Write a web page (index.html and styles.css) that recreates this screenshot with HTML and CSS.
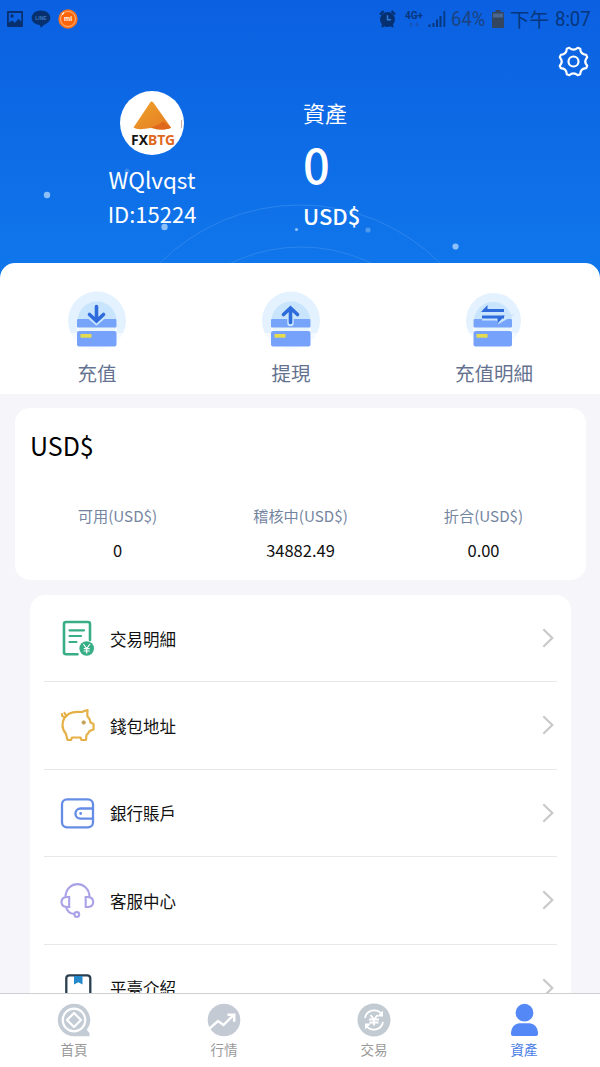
FILE: index.html
```html
<!DOCTYPE html>
<html lang="zh-Hant">
<head>
<meta charset="utf-8">
<title>資產</title>
<link rel="stylesheet" href="styles.css">
</head>
<body>
<div class="app">
  <header class="hero">
    <svg class="hero-art" width="600" height="280" viewBox="0 0 600 280" fill="none">
      <circle cx="300" cy="403" r="198" stroke="#4795f1" stroke-opacity=".5"/>
      <circle cx="301" cy="408" r="161" stroke="#4795f1" stroke-opacity=".5"/>
      <g fill="#8dc0f8">
        <circle cx="47" cy="195" r="3.2"/>
        <circle cx="164.500" cy="227" r="3.2"/>
        <circle cx="296.500" cy="229.500" r="1.6"/>
        <circle cx="368" cy="230" r="2.6" opacity=".5"/>
        <circle cx="455.500" cy="246.500" r="3.1"/>
        <circle cx="127" cy="171" r="2.5" opacity=".3"/>
      </g>
    </svg>
    <div class="status">
      <div class="status-side status-left">
        <svg width="18" height="18" viewBox="0 0 18 18"><path fill="#06306f" fill-rule="evenodd" d="M2 1h14q1 0 1 1v14q0 1-1 1H2q-1 0-1-1V2q0-1 1-1zM2.800 3v9.500l3.200-2 3 2.200 3.500-4 2.800 3V3z"/><circle cx="6" cy="6" r="1.700" fill="#06306f"/></svg>
        <svg width="20" height="18" viewBox="0 0 20 18"><path fill="#06306f" d="M10 .5c5.200 0 9.300 3.200 9.300 7.300 0 3.500-3.500 5.900-6.500 7.200L10 17.700 8.800 15C4 14.500.7 11.900.7 7.800S4.800.5 10 .5z"/><text class="line-mark" x="10" y="10" text-anchor="middle">LINE</text></svg>
        <svg width="20" height="20" viewBox="0 0 20 20"><circle cx="10" cy="10" r="9.700" fill="#f57220"/><circle cx="10" cy="10" r="7.500" fill="#fb6509" stroke="#ffc391" stroke-width=".8"/><path d="M4 5.500 6 3.700" stroke="#fff" stroke-width="1.300"/><text class="mi-mark" x="10" y="12.300" text-anchor="middle">mi</text></svg>
      </div>
      <div class="status-side status-right">
        <svg width="17" height="18" viewBox="0 0 17 18"><path d="M1 4.500 4.500 1M12.500 1 16 4.500M3 17l2-2.500M14 17l-2-2.500" stroke="#06306f" stroke-width="2.300"/><circle cx="8.500" cy="9.500" r="7.400" fill="#06306f"/><path d="M8.500 5.300v4.500H12" fill="none" stroke="#2f7ce0" stroke-width="1.500"/></svg>
        <div class="network"><span>4G+</span><svg width="10" height="5" viewBox="0 0 10 5"><path d="M2 5V1M.5 2.500 2 1l1.500 1.500M8 0v4M6.500 2.500 8 4l1.500-1.500" stroke="#184b9e" fill="none" stroke-width=".8"/></svg></div>
        <svg width="18" height="18" viewBox="0 0 18 18" fill="#07377f"><path d="M.5 14.500h2V17h-2zM4.500 13h2v4h-2zM8 9.500h2V17H8zM11.500 6h2v11h-2zM15.500 1h1.700v16h-1.700z"/></svg>
        <span class="battery-text">64%</span>
        <svg width="12" height="18" viewBox="0 0 12 18"><path d="M3.500 0h5v2H11q1 0 1 1v14q0 1-1 1H1q-1 0-1-1V3q0-1 1-1h2.500z" fill="#34465e"/><path d="M1 3.500h10v4H1z" fill="#4a6791"/></svg>
        <span class="meridiem">下午</span><span class="clock">8:07</span>
      </div>
    </div>
    <svg class="gear" width="31" height="31" viewBox="0 0 31 31" fill="none" stroke="#fff" stroke-width="2.200"><path stroke-linejoin="round" d="M11.200 1.800 Q15.500 5.600 19.800 1.800 L22.200 2.800 Q22.500 8.500 28.200 8.800 L29.200 11.200 Q25.400 15.500 29.200 19.800 L28.200 22.200 Q22.500 22.500 22.200 28.200 L19.800 29.200 Q15.500 25.400 11.200 29.200 L8.800 28.200 Q8.500 22.500 2.800 22.200 L1.800 19.800 Q5.600 15.500 1.800 11.200 L2.800 8.800 Q8.500 8.500 8.800 2.800 Z"/><circle cx="15.500" cy="15.500" r="5"/></svg>
    <div class="summary">
      <div class="profile">
        <svg class="avatar" width="64" height="64" viewBox="0 0 64 64">
          <defs><linearGradient id="peak" x1="0" y1="0" x2="1" y2="1"><stop offset="0" stop-color="#efa32b"/><stop offset="1" stop-color="#e47b22"/></linearGradient></defs>
          <circle cx="32" cy="32" r="32" fill="#fff"/>
          <path d="M31.500 10.500Q33 10.500 34 12.500L51 36.500Q47 39 37 38.500 32 36 27 37.500 17 39.500 13.500 36.500L29.500 12.500Q30.500 10.500 31.500 10.500z" fill="url(#peak)"/>
          <path d="M51 36.500 43.500 30.500Q38 34.500 31 36.500 39 39.500 47 38 50 37.600 51 36.500z" fill="#df681c"/>
          <path d="M61.500 29v8" stroke="#9e5b50" stroke-width=".5"/>
          <text class="brand" x="11" y="54" textLength="44" lengthAdjust="spacingAndGlyphs"><tspan fill="#141414">FX</tspan><tspan fill="#df681e">BTG</tspan></text>
        </svg>
        <div class="user-name">WQlvqst</div>
        <div class="user-id">ID:15224</div>
      </div>
      <div class="assets">
        <div class="assets-label">資產</div>
        <div class="assets-value">0</div>
        <div class="assets-unit">USD$</div>
      </div>
    </div>
  </header>

  <nav class="actions">
    <a class="action">
      <svg width="60" height="58" viewBox="0 0 60 58"><circle cx="30" cy="29.500" r="29" fill="#e3f2fe"/><circle cx="30" cy="30" r="19.500" fill="#c9e5fd"/><path d="M0 42h60v16H0z" fill="#fff" opacity=".6"/><path d="M10 57V28h40v29z" fill="#fff" opacity=".6"/><rect x="10" y="28" width="39.500" height="8.500" rx="1" fill="#76a4fa"/><rect x="10" y="40" width="39.500" height="15.500" rx="2" fill="#76a2fb"/><path d="M13.500 43h11v3.700h-11z" fill="#e4db4e"/><path d="M29.500 17v13M22.500 24.500l7 6 7-6" stroke="#c9e5fd" stroke-width="6.500" fill="none"/><path d="M29.500 15.500v14M22.500 23.500l7 6.500 7-6.500" stroke="#2e6bdc" stroke-width="3.600" fill="none" stroke-linecap="round"/></svg>
      <span>充值</span>
    </a>
    <a class="action">
      <svg width="60" height="58" viewBox="0 0 60 58"><circle cx="30" cy="29.500" r="29" fill="#e3f2fe"/><circle cx="30" cy="30" r="19.500" fill="#c9e5fd"/><path d="M0 42h60v16H0z" fill="#fff" opacity=".6"/><path d="M10 57V28h40v29z" fill="#fff" opacity=".6"/><rect x="10" y="28" width="39.500" height="8.500" rx="1" fill="#76a4fa"/><rect x="10" y="40" width="39.500" height="15.500" rx="2" fill="#76a2fb"/><path d="M13.500 43h11v3.700h-11z" fill="#e4db4e"/><path d="M29.500 17v15M22.500 24l7-6.500 7 6.500" stroke="#c9e5fd" stroke-width="6.500" fill="none" stroke-linecap="round"/><path d="M29.500 18v13.500M22.500 23.500l7-6.500 7 6.500" stroke="#2e6bdc" stroke-width="3.600" fill="none" stroke-linecap="round"/></svg>
      <span>提現</span>
    </a>
    <a class="action">
      <svg width="60" height="58" viewBox="0 0 60 58"><circle cx="29.500" cy="29.500" r="27.500" fill="#e3f2fe"/><circle cx="29" cy="30" r="19" fill="#c9e5fd"/><path d="M0 42h60v16H0z" fill="#fff" opacity=".6"/><path d="M9 57V28h39v29z" fill="#fff" opacity=".6"/><rect x="9.500" y="28" width="38.500" height="8.500" rx="1" fill="#76a4fa"/><rect x="9.500" y="40" width="38.500" height="15.500" rx="2" fill="#76a2fb"/><path d="M12.500 43h11v3.700h-11z" fill="#e4db4e"/><path d="M18 20.500h22M18 26.500h22l-7 4" stroke="#c9e5fd" stroke-width="6" fill="none"/><path d="M40 19.500H19.500M18 26h22" stroke="#2e6bdc" stroke-width="3"/><path d="M17 21l6.500-7v7zM41 24.500l-7.500 8v-7z" fill="#2e6bdc"/></svg>
      <span>充值明細</span>
    </a>
  </nav>

  <main class="content">
    <section class="balance">
      <h2 class="balance-title">USD$</h2>
      <div class="balance-grid">
        <div class="cell"><span class="cell-label">可用(USD$)</span><span class="cell-value">0</span></div>
        <div class="cell"><span class="cell-label">稽核中(USD$)</span><span class="cell-value">34882.49</span></div>
        <div class="cell"><span class="cell-label">折合(USD$)</span><span class="cell-value">0.00</span></div>
      </div>
    </section>
    <section class="menu">
      <a class="menu-row">
        <svg class="menu-icon" width="36" height="36" viewBox="0 0 36 36" fill="none" stroke="#38ae87" stroke-width="2.600" stroke-linecap="round"><path d="M17.500 34.300H6q-2 0-2-2V4q0-2 2-2h22q2 0 2 2v16"/><path d="M9.500 10.300h14.500M9.500 16h11.500M9.500 22h7" stroke-width="2.200"/><circle cx="26.700" cy="28.500" r="7.300" fill="#38ae87" stroke="none"/><path d="m23.700 24.500 3 4 3-4M26.700 28.500v4.500M24.200 28.700h5M24.200 31h5" stroke="#fff" stroke-width="1.200"/></svg>
        <span class="menu-label">交易明細</span>
        <svg class="chevron" width="12" height="20" viewBox="0 0 12 20"><path d="m1.300 1.300 9 8.700-9 8.700"/></svg>
      </a>
      <a class="menu-row">
        <svg class="menu-icon" width="36" height="36" viewBox="0 0 36 36" fill="none" stroke="#e5b046" stroke-width="2.200" stroke-linejoin="round" stroke-linecap="round"><path d="M22 5Q25 3.500 27.500 3.200L27.300 9Q30 12 30.500 15.500L33.500 17v5.500l-4 1.500Q28 27 26.500 28L26 33h-4.500l-1-2.500H12L11 33H7.500L6 27Q2.500 23 2.500 18 3 10 9 6.800 13 4.600 18 4.800z"/><path d="M5 10Q1.500 10 2 7M6.500 9 4.500 6"/><circle cx="23.700" cy="15.500" r="1.700" fill="#b9a16a" stroke="#cda64f" stroke-width="1"/></svg>
        <span class="menu-label">錢包地址</span>
        <svg class="chevron" width="12" height="20" viewBox="0 0 12 20"><path d="m1.300 1.300 9 8.700-9 8.700"/></svg>
      </a>
      <a class="menu-row">
        <svg class="menu-icon" width="36" height="36" viewBox="0 0 36 36" fill="none" stroke="#668de6" stroke-width="2.300"><rect x="2" y="4.300" width="31" height="28" rx="5"/><path d="M33 13.500H20.500a5 5 0 0 0 0 10.200H33"/><circle cx="20.700" cy="18.500" r="1.400" fill="#668de6" stroke="none"/></svg>
        <span class="menu-label">銀行賬戶</span>
        <svg class="chevron" width="12" height="20" viewBox="0 0 12 20"><path d="m1.300 1.300 9 8.700-9 8.700"/></svg>
      </a>
      <a class="menu-row">
        <svg class="menu-icon" width="36" height="36" viewBox="0 0 36 36" fill="none" stroke="#aaa2e8" stroke-width="2.100"><path d="M5.500 14.500C6.500-2 28.500-2 29.500 14.500M9.200 15H6.500Q1.500 15.500 1.500 20T6.500 25H9.200zM25.700 15h2.500q5 .5 5 5t-5 5h-2.500zM6 25Q7.500 31.500 14.500 32"/><circle cx="16.800" cy="32.500" r="2.400"/></svg>
        <span class="menu-label">客服中心</span>
        <svg class="chevron" width="12" height="20" viewBox="0 0 12 20"><path d="m1.300 1.300 9 8.700-9 8.700"/></svg>
      </a>
      <a class="menu-row">
        <svg class="menu-icon" width="36" height="36" viewBox="0 0 36 36"><rect x="6.300" y="5.300" width="24" height="28" rx="3" fill="none" stroke="#293f50" stroke-width="2.300"/><path d="M14 6h8.500v8.500l-4.200-2.300-4.300 2.300z" fill="#2489cb"/></svg>
        <span class="menu-label">平臺介紹</span>
        <svg class="chevron" width="12" height="20" viewBox="0 0 12 20"><path d="m1.300 1.300 9 8.700-9 8.700"/></svg>
      </a>
    </section>
  </main>

  <nav class="tabs">
    <a class="tab">
      <svg width="34" height="34" viewBox="0 0 34 34"><path d="M17 .8a16.200 16.200 0 1 0 0 32.400h15.500v-3l-2.700-3.400A16.200 16.200 0 0 0 17 .8z" fill="#c3cbd4"/><g fill="none" stroke="#fff" stroke-width="2.200"><circle cx="17" cy="17" r="11.300"/><path d="m17 10 7 7-7 7-7-7z" stroke-linejoin="round"/></g></svg>
      <span>首頁</span>
    </a>
    <a class="tab">
      <svg width="34" height="34" viewBox="0 0 34 34"><circle cx="17" cy="17" r="16.300" fill="#c3cad3"/><path d="m2.500 25.500 8.500-7.500 5.500 4L26.500 12" fill="none" stroke="#fff" stroke-width="2.400"/><path d="M20.500 11.700h6.700v7" fill="none" stroke="#fff" stroke-width="2.600"/></svg>
      <span>行情</span>
    </a>
    <a class="tab">
      <svg width="34" height="34" viewBox="0 0 34 34"><circle cx="17" cy="17" r="16.500" fill="#c3cbd2"/><g fill="none" stroke="#fff" stroke-width="1.800"><path d="M8 15a9.300 9.300 0 0 1 16.500-4M26 19a9.300 9.300 0 0 1-16.500 4"/><path d="m13.500 12 3.500 4.500 3.500-4.500M17 16v6.500M12 16.500h10M12.500 19.500h9"/></g><path d="M26 7.500v6h-6zM8 26.500v-6h6z" fill="#fff"/></svg>
      <span>交易</span>
    </a>
    <a class="tab tab-active">
      <svg width="34" height="34" viewBox="0 0 34 34" fill="#5488f6"><circle cx="17.500" cy="9.700" r="8.900"/><path d="M4 31v-1.500Q5 21 12 20.200h11Q30 21 31 29.500V31q0 2-2 2H6q-2 0-2-2z"/></svg>
      <span>資產</span>
    </a>
  </nav>
</div>
</body>
</html>
```

FILE: styles.css
```css
* { box-sizing: border-box; }

body {
  margin: 0;
  background: #f5f5fa;
  font-family: "Noto Sans CJK TC", "Noto Sans", sans-serif;
  color: #111;
}

svg { display: block; flex: none; }

.app {
  width: 600px;
  height: 1067px;
  display: flex;
  flex-direction: column;
  overflow: hidden;
}

/* Header */
.hero {
  position: relative;
  flex: none;
  height: 280px;
  display: flex;
  flex-direction: column;
  background: linear-gradient(#0b60e1, #1077eb);
  color: #fff;
}
.hero-art { position: absolute; left: 0; top: 0; }

.status {
  position: relative;
  height: 37px;
  display: flex;
  justify-content: space-between;
  padding: 0 9px 0 7px;
  color: #07367c;
}
.status-side { display: flex; align-items: center; }
.status-left { gap: 7px; margin-left: -1px; }
.line-mark { font: bold 5px "Liberation Sans", sans-serif; fill: #4278bd; }
.mi-mark { font: bold 7px "Liberation Sans", sans-serif; fill: #fff; }
.network {
  width: 18px;
  margin: 0 5px 0 9px;
  display: flex;
  flex-direction: column;
  align-items: center;
  gap: 2px;
  font: bold 10px/9px Roboto, sans-serif;
}
.battery-text, .clock {
  font: 21px/24px Roboto, sans-serif;
  transform: scaleX(.88);
  transform-origin: left;
}
.battery-text { width: 36px; margin-left: 5px; margin-right: 5px; color: #1c437f; }
.meridiem { width: 40px; margin: 0 5px 0 6px; font-size: 19.5px; line-height: 24px; }
.clock { width: 36px; }

.gear { position: relative; align-self: flex-end; margin: 9px 11px 0 0; }

.summary { position: relative; display: flex; margin-top: 14px; }
.profile { width: 304px; display: flex; flex-direction: column; align-items: center; }
.brand { font: bold 15px "Noto Sans", sans-serif; }
.user-name { margin-top: 7px; font-size: 22.5px; line-height: 34px; }
.user-id { font-size: 22px; line-height: 35px; }
.assets { padding-top: 4px; margin-left: -1px; }
.assets-label { font-size: 22px; line-height: 34px; }
.assets-value { font-size: 47px; line-height: 70px; font-weight: 500; }
.assets-unit { font-size: 22px; line-height: 32px; font-weight: 500; }

/* Quick actions */
.actions {
  position: relative;
  flex: none;
  height: 131px;
  margin-top: -17px;
  padding-top: 28px;
  display: grid;
  grid-template-columns: 194px 194px 212px;
  background: #fff;
  border-radius: 15px 15px 0 0;
}
.action {
  display: flex;
  flex-direction: column;
  align-items: center;
  gap: 10px;
  font-size: 19.5px;
  line-height: 28px;
  color: #64728f;
}

/* Balance and menu */
.content { flex: 1; min-height: 0; overflow: hidden; padding: 14px 14px 0 15px; }
.balance { height: 172px; padding: 19px 11px 0; background: #fff; border-radius: 15px; }
.balance-title { margin: 0 4px; font-size: 25px; line-height: 36px; font-weight: 400; color: #000; }
.balance-grid { display: grid; grid-template-columns: repeat(3, 1fr); margin-top: 40px; }
.cell { display: flex; flex-direction: column; align-items: center; gap: 11px; }
.cell-label { font-size: 15.2px; line-height: 24px; color: #75859f; }
.cell-value { font-size: 16.5px; line-height: 24px; }

.menu { margin: 15px 15px 0; padding: 0 14px; background: #fff; border-radius: 15px; }
.menu-row {
  height: 87.5px;
  display: flex;
  align-items: center;
  padding: 0 3px 0 16px;
  border-bottom: 1px solid #e8e8e8;
}
.menu-row:first-child { height: 87px; }
.menu-label { flex: 1; margin-left: 14px; padding-top: 1px; font-size: 16.5px; line-height: 24px; }
.chevron { fill: none; stroke: #c9c9cb; stroke-width: 2.2; }

/* Bottom tabs */
.tabs {
  position: relative;
  flex: none;
  height: 74px;
  display: grid;
  grid-template-columns: repeat(4, 150px);
  padding-top: 9px;
  margin-left: -1px;
  background: #fff;
  width: 601px;
  border-top: 1.5px solid #cfcfd1;
}
.tab {
  display: flex;
  flex-direction: column;
  align-items: center;
  gap: 1px;
  font-size: 13.5px;
  line-height: 22px;
  color: #999;
}
.tab-active { color: #4a7ee6; }
```
